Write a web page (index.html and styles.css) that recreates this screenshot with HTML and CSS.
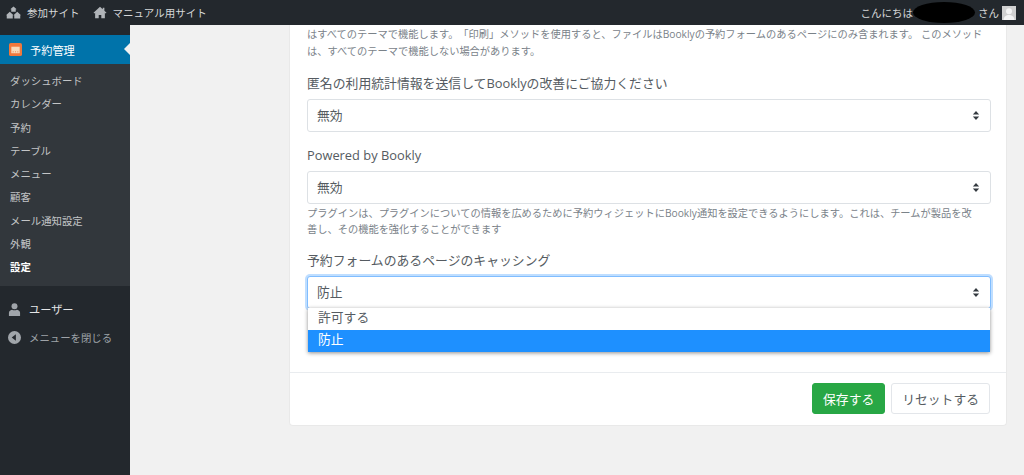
FILE: index.html
```html
<!DOCTYPE html>
<html lang="ja">
  <head>
    <title>Bookly 設定</title>
    <meta name="viewport" content="width=device-width, initial-scale=1.0" />
    <link rel="stylesheet" href="styles.css">
  </head>

  <body>
    <nav class="topbar">
      <a class="topbar-item">
        <svg class="topbar-icon" viewBox="0 0 20 16"><path d="M10 0l4.200 3.800H13V7H7V3.800H5.800zM5 7l5 4.500H9V16H1v-4.500H0zM15 7l5 4.500h-1V16h-8v-4.500h-1z"/></svg>
        参加サイト
      </a>
      <a class="topbar-item">
        <svg class="topbar-icon topbar-icon-home" viewBox="0 0 16 16"><path d="M8 1L0 8.200l1 1 1-.9V15h4.400v-4h3.200v4H14V8.300l1 .9 1-1-2.600-2.300V2h-2v2.100z"/></svg>
        マニュアル用サイト
      </a>
      <div class="topbar-user">
        <span>こんにちは</span>
        <span class="redacted"></span>
        <span>さん</span>
        <svg class="avatar" viewBox="0 0 14 14"><rect width="14" height="14" fill="#d0d0d0"/><circle cx="7" cy="5.200" r="3" fill="#f4f4f4"/><path d="M1.500 14c.4-3.600 2.600-5 5.500-5s5.100 1.400 5.500 5z" fill="#f4f4f4"/></svg>
      </div>
    </nav>

    <div class="layout">
      <aside class="sidebar">
        <div class="menu-current">
          <svg class="menu-logo" viewBox="0 0 14 14"><rect width="14" height="14" rx="2" fill="#f0783c"/><rect x="2.500" y="4" width="9" height="7" fill="#f8d9b8"/><path d="M4 9.500h1M6.500 9.500h1M9 9.500h1" stroke="#f0783c"/></svg>
          予約管理
        </div>
        <ul class="submenu">
          <li>ダッシュボード</li>
          <li>カレンダー</li>
          <li>予約</li>
          <li>テーブル</li>
          <li>メニュー</li>
          <li>顧客</li>
          <li>メール通知設定</li>
          <li>外観</li>
          <li class="current">設定</li>
        </ul>
        <div class="menu-item">
          <svg class="menu-icon" viewBox="0 0 14 14"><circle cx="7" cy="3.500" r="3.200"/><path d="M1 14v-3.500C1 8.500 3 7.500 4.500 7.200 5.500 8 8.500 8 9.500 7.200 11 7.500 13 8.500 13 10.500V14z"/></svg>
          ユーザー
        </div>
        <div class="menu-collapse">
          <svg class="menu-icon" viewBox="0 0 14 14"><path fill-rule="evenodd" d="M7 0a7 7 0 1 0 0 14A7 7 0 0 0 7 0zM8.500 3.500v7L4 7z"/></svg>
          メニューを閉じる
        </div>
      </aside>

      <main class="content">
        <section class="card">
          <div class="card-body">
            <p class="help">はすべてのテーマで機能します。「印刷」メソッドを使用すると、ファイルはBooklyの予約フォームのあるページにのみ含まれます。 このメソッド<br>は、すべてのテーマで機能しない場合があります。</p>

            <div class="field">
              <label class="field-label">匿名の利用統計情報を送信してBooklyの改善にご協力ください</label>
              <div class="select">
                無効
                <svg class="select-arrows" viewBox="0 0 8 10"><path d="M4 0l3.500 4h-7zM4 10L.5 6h7z"/></svg>
              </div>
            </div>

            <div class="field">
              <label class="field-label">Powered by Bookly</label>
              <div class="select">
                無効
                <svg class="select-arrows" viewBox="0 0 8 10"><path d="M4 0l3.500 4h-7zM4 10L.5 6h7z"/></svg>
              </div>
              <p class="help help-below">プラグインは、プラグインについての情報を広めるために予約ウィジェットにBookly通知を設定できるようにします。これは、チームが製品を改<br>善し、その機能を強化することができます</p>
            </div>

            <div class="field">
              <label class="field-label">予約フォームのあるページのキャッシング</label>
              <div class="select select-open">
                防止
                <svg class="select-arrows" viewBox="0 0 8 10"><path d="M4 0l3.500 4h-7zM4 10L.5 6h7z"/></svg>
                <ul class="select-list">
                  <li>許可する</li>
                  <li class="active">防止</li>
                </ul>
              </div>
            </div>
          </div>

          <div class="card-footer">
            <button class="btn btn-save">保存する</button>
            <button class="btn btn-reset">リセットする</button>
          </div>
        </section>
      </main>
    </div>
  </body>
</html>
```

FILE: styles.css
```css
/* Admin page at a small scale, so most sizes are fractional */
html,
body {
  height: 100%;
}

body {
  margin: 0;
  overflow: hidden;
  display: flex;
  flex-direction: column;
  background-color: #f1f1f1;
  font-family: "Open Sans", "Noto Sans CJK JP", sans-serif;
  color: #555b61;
  text-spacing-trim: space-all;
}

ul {
  list-style: none;
  margin: 0;
  padding: 0;
}

/* Top bar */
.topbar {
  flex: none;
  height: 25px;
  display: flex;
  align-items: center;
  padding: 0 8px 0 6px;
  background-color: #23282d;
  color: #d5d7d8;
  font-size: 10.500px;
}

.topbar-item {
  display: flex;
  align-items: center;
  gap: 6px;
  margin-right: 13px;
}

.topbar-icon {
  width: 15px;
  height: 13px;
  fill: #b0b4b8;
}

.topbar-icon-home {
  width: 14px;
}

.topbar-user {
  margin-left: auto;
  display: flex;
  align-items: center;
}

.redacted {
  width: 62px;
  height: 21px;
  margin: 0 3px 0 0;
  border-radius: 50%/50%;
  background-color: #000;
}

.avatar {
  width: 14px;
  height: 14px;
  margin-left: 3px;
}

/* Sidebar */
.layout {
  flex: 1;
  display: flex;
  min-height: 0;
}

.sidebar {
  flex: none;
  width: 130px;
  padding-top: 10px;
  background-color: #23282d;
  color: #c3c5c7;
  font-size: 10.400px;
}

.menu-current {
  position: relative;
  height: 29px;
  display: flex;
  align-items: center;
  gap: 8px;
  padding-left: 9px;
  background-color: #0073aa;
  color: #fff;
  font-size: 11.200px;
}

/* notch pointing at the content */
.menu-current::after {
  content: "";
  position: absolute;
  right: 0;
  top: 8px;
  border: 6px solid transparent;
  border-right-color: #f1f1f1;
}

.menu-logo {
  width: 13px;
  height: 13px;
}

.submenu {
  padding: 6px 0;
  background-color: #32373c;
}

.submenu li {
  height: 23.300px;
  line-height: 23.300px;
  padding-left: 10px;
}

.submenu .current {
  color: #fff;
  font-weight: 700;
}

.menu-item,
.menu-collapse {
  display: flex;
  align-items: center;
  gap: 8px;
  padding-left: 8px;
}

.menu-item {
  height: 29px;
  margin-top: 9px;
  color: #e4e5e6;
  font-size: 11.200px;
}

.menu-collapse {
  height: 28px;
  color: #9ea3a8;
}

.menu-icon {
  width: 13px;
  height: 13px;
  fill: #a0a5aa;
}

/* Settings card */
.content {
  flex: 1;
  min-width: 0;
  padding: 0 17px 0 159px;
}

.card {
  background-color: #fff;
  border: 1px solid #e9e9e9;
  border-top: none;
  border-radius: 0 0 4px 4px;
}

.card-body {
  padding: 1px 15px 63px 17px;
}

.help {
  margin: 0;
  font-size: 10.240px;
  line-height: 17px;
  color: #7a8289;
}

.help-below {
  margin-top: 2px;
  line-height: 15.500px;
}

.field {
  margin-top: 14px;
}

.field-label {
  display: block;
  margin-bottom: 6px;
  font-size: 12.850px;
  line-height: 19px;
}

.select {
  position: relative;
  height: 33px;
  box-sizing: border-box;
  display: flex;
  align-items: center;
  justify-content: space-between;
  padding: 0 10px 2px 9px;
  border: 1px solid #dde1e5;
  border-radius: 3px;
  background-color: #fff;
  font-size: 12.800px;
}

.select-arrows {
  width: 8px;
  height: 9px;
  margin-top: 2px;
  fill: #343a40;
}

.select-open {
  border-color: #80bdff;
  box-shadow: 0 0 0 2px rgba(0, 123, 255, 0.25);
}

.select-list {
  position: absolute;
  left: 0;
  right: 0;
  top: 31px;
  background-color: #fff;
  box-shadow: 0 1px 4px rgba(0, 0, 0, 0.45);
}

.select-list li {
  height: 22px;
  line-height: 19px;
  padding-left: 10px;
}

.select-list .active {
  background-color: #1e90ff;
  color: #fff;
}

.card-footer {
  display: flex;
  justify-content: flex-end;
  gap: 6px;
  padding: 10px 16px 11px;
  border-top: 1px solid #e9ecef;
}

.btn {
  height: 31px;
  padding: 0 10px;
  border: 1px solid #e3e6ea;
  border-radius: 3px;
  font-family: inherit;
  font-size: 12.800px;
  cursor: pointer;
}

.btn-save {
  border-color: #28a745;
  background-color: #28a745;
  color: #fff;
}

.btn-reset {
  background-color: #fff;
  color: #555b61;
}
```
